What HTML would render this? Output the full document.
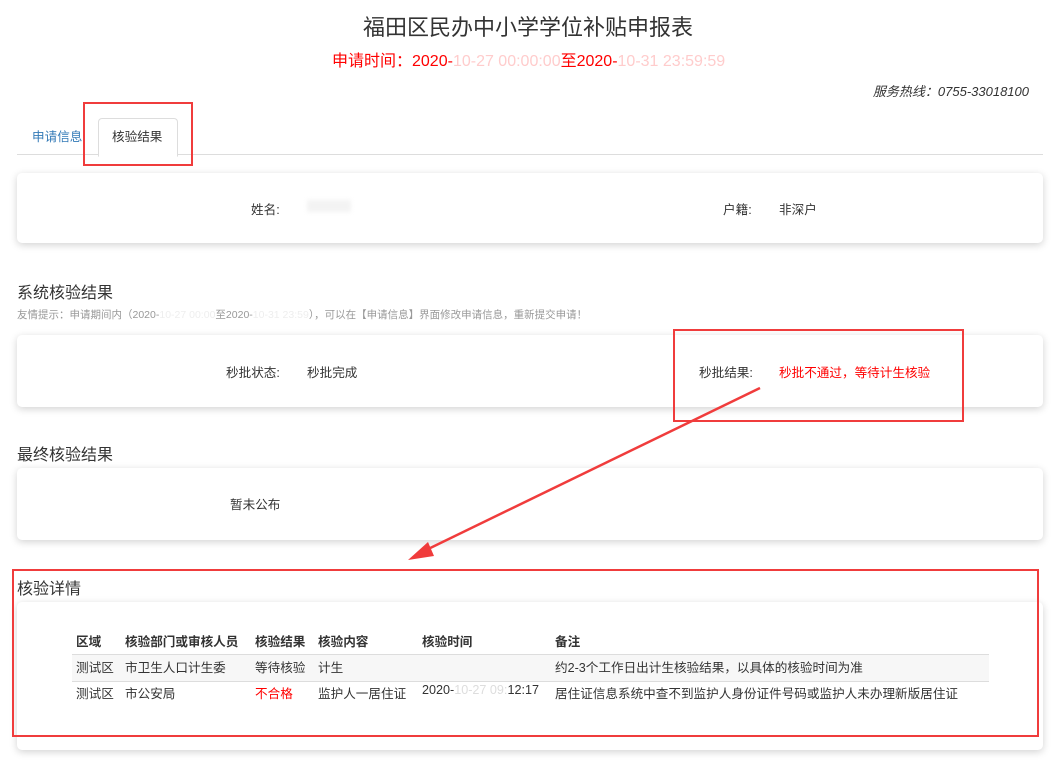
<!DOCTYPE html>
<html><head><meta charset="utf-8"><style>
body{margin:0;width:1056px;height:766px;background:#fff;font-family:"Liberation Sans","Noto Sans CJK SC",sans-serif;color:#333;position:relative;overflow:hidden;font-size:12.6px}
.a{position:absolute;white-space:nowrap}
.card{position:absolute;left:17px;width:1026px;background:#fff;border-radius:5px;box-shadow:0 2px 8px rgba(0,0,0,.18)}
.rb{position:absolute;border:2px solid #f03c3c}
.blur{display:inline-block;background:#eee;filter:blur(2px)}
</style></head><body>
<div class="a" style="left:0;width:1056px;text-align:center;top:10px;font-size:22px;color:#333">福田区民办中小学学位补贴申报表</div>
<div class="a" style="left:332px;top:47px;font-size:16px;color:#f00">申请时间：2020-<span style="color:#fcc">10-27 00:00:00</span>至2020-<span style="color:#fcc">10-31 23:59:59</span></div>
<div class="a" style="right:27px;top:81px;font-size:13px;font-style:italic;color:#333">服务热线：0755-33018100</div>
<div class="a" style="left:17px;top:154px;width:1026px;border-top:1px solid #ddd"></div>
<div class="a" style="left:32px;top:126px;color:#337ab7">申请信息</div>
<div class="a" style="left:98px;top:118px;width:78px;height:37px;border:1px solid #ddd;border-bottom:1px solid #fff;border-radius:4px 4px 0 0;background:#fff"></div>
<div class="a" style="left:112px;top:126px">核验结果</div>
<div class="rb" style="left:83px;top:102px;width:106px;height:60px"></div>

<div class="card" style="top:173px;height:70px"></div>
<div class="a" style="left:251px;top:199px">姓名:</div>
<div class="a" style="left:307px;top:200px"><span class="blur" style="width:44px;height:12px;background:#f3f3f3"></span></div>
<div class="a" style="left:723px;top:199px">户籍:</div>
<div class="a" style="left:779px;top:199px">非深户</div>

<div class="a" style="left:17px;top:279px;font-size:16px">系统核验结果</div>
<div class="a" style="left:17px;top:307px;font-size:10.5px;color:#999">友情提示：申请期间内（2020-<span style="color:#eee">10-27 00:00</span>至2020-<span style="color:#eee">10-31 23:59</span>），可以在【申请信息】界面修改申请信息，重新提交申请！</div>
<div class="card" style="top:335px;height:72px"></div>
<div class="a" style="left:226px;top:362px">秒批状态:</div>
<div class="a" style="left:307px;top:362px">秒批完成</div>
<div class="a" style="left:699px;top:362px">秒批结果:</div>
<div class="a" style="left:779px;top:362px;color:#f00">秒批不通过，等待计生核验</div>
<div class="rb" style="left:673px;top:329px;width:287px;height:89px"></div>

<div class="a" style="left:17px;top:441px;font-size:16px">最终核验结果</div>
<div class="card" style="top:468px;height:72px"></div>
<div class="a" style="left:230px;top:494px">暂未公布</div>

<svg class="a" style="left:0;top:0" width="1056" height="766"><line x1="760" y1="388" x2="422" y2="552" stroke="#f03c3c" stroke-width="2.5"/><polygon points="408,560 428,542 434,556" fill="#f03c3c"/></svg>

<div class="a" style="left:17px;top:575px;font-size:16px">核验详情</div>
<div class="card" style="top:602px;height:148px"></div>
<div class="a" style="left:72px;top:654px;width:917px;height:26px;background:#f7f7f7;border-top:1px solid #ddd;border-bottom:1px solid #ddd"></div>
<div class="a" style="left:76px;top:631px;font-weight:bold">区域</div>
<div class="a" style="left:125px;top:631px;font-weight:bold">核验部门或审核人员</div>
<div class="a" style="left:255px;top:631px;font-weight:bold">核验结果</div>
<div class="a" style="left:318px;top:631px;font-weight:bold">核验内容</div>
<div class="a" style="left:422px;top:631px;font-weight:bold">核验时间</div>
<div class="a" style="left:555px;top:631px;font-weight:bold">备注</div>
<div class="a" style="left:76px;top:657px">测试区</div>
<div class="a" style="left:125px;top:657px">市卫生人口计生委</div>
<div class="a" style="left:255px;top:657px">等待核验</div>
<div class="a" style="left:318px;top:657px">计生</div>
<div class="a" style="left:555px;top:657px">约2-3个工作日出计生核验结果，以具体的核验时间为准</div>
<div class="a" style="left:76px;top:683px">测试区</div>
<div class="a" style="left:125px;top:683px">市公安局</div>
<div class="a" style="left:255px;top:683px;color:#f00">不合格</div>
<div class="a" style="left:318px;top:683px">监护人一居住证</div>
<div class="a" style="left:422px;top:683px">2020-<span style="color:#ddd">10-27 09:</span>12:17</div>
<div class="a" style="left:555px;top:683px">居住证信息系统中查不到监护人身份证件号码或监护人未办理新版居住证</div>
<div class="rb" style="left:12px;top:569px;width:1023px;height:164px"></div>
</body></html>
